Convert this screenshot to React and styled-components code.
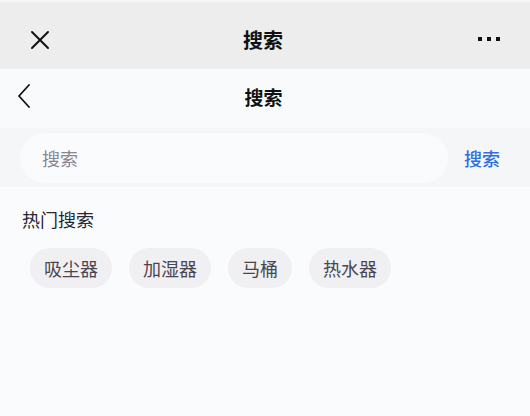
import React from "react";
import styled, { createGlobalStyle } from "styled-components";

const GlobalStyle = createGlobalStyle`
  html, body {
    margin: 0;
    padding: 0;
    background: #fafbfd;
  }
  * {
    box-sizing: border-box;
  }
`;

const FONT = `"Noto Sans CJK SC", "Noto Sans", sans-serif`;

const Page = styled.div`
  width: 530px;
  height: 416px;
  display: flex;
  flex-direction: column;
  background: #fafbfd;
  font-family: ${FONT};
  overflow: hidden;
`;

const TopBar = styled.div`
  height: 69px;
  display: flex;
  align-items: center;
  justify-content: space-between;
  padding: 9px 30px 0 30px;
  background: #ededed;
  border-top: 2px solid #f6f6f6;
`;

const BarTitle = styled.div`
  font-size: ${(props) => props.size};
  font-weight: 700;
  color: #111;
  line-height: 1;
`;

const IconSlot = styled.div`
  width: ${(props) => props.width};
  display: flex;
  align-items: center;
  justify-content: ${(props) => props.justify || "flex-start"};
`;

const Dots = styled.div`
  display: flex;
  gap: 5px;
  margin-top: -2px;
`;

const Dot = styled.span`
  width: 4px;
  height: 4px;
  background: #111;
`;

const NavBar = styled.div`
  height: 59px;
  display: flex;
  align-items: center;
  justify-content: space-between;
  padding: 0 20px 5px 17px;
  background: #f9fafc;
`;

const SearchStrip = styled.div`
  height: 59px;
  display: flex;
  align-items: center;
  gap: 16px;
  padding: 0 30px 0 20px;
  background: #f5f6f8;
`;

const SearchInput = styled.div`
  flex: 1;
  height: 50px;
  border-radius: 25px;
  background: #fafbfd;
  display: flex;
  align-items: center;
  padding-left: 22px;
  font-size: 18px;
  color: #8a8590;
`;

const SearchButton = styled.div`
  font-size: 18px;
  color: #2d6fde;
  font-weight: 500;
`;

const HotSection = styled.div`
  padding: 20px 0 0 22px;
`;

const HotTitle = styled.div`
  font-size: 18px;
  color: #2a2630;
  line-height: 25px;
`;

const ChipRow = styled.div`
  display: flex;
  gap: 17px;
  margin-top: 16px;
  padding-left: 8px;
`;

const Chip = styled.div`
  height: 40px;
  padding: 0 14px;
  border-radius: 20px;
  background: #f0f0f3;
  display: flex;
  align-items: center;
  font-size: 18px;
  color: #4a4550;
`;

const hotWords = ["吸尘器", "加湿器", "马桶", "热水器"];

const App = () => {
  return (
    <>
      <GlobalStyle />
      <Page>
        <TopBar>
          <IconSlot width="60px">
            <svg width="20" height="20" viewBox="0 0 20 20">
              <path
                d="M2 2 L18 18 M18 2 L2 18"
                stroke="#111"
                strokeWidth="2"
                strokeLinecap="round"
              />
            </svg>
          </IconSlot>
          <BarTitle size="20px">搜索</BarTitle>
          <IconSlot width="64px" justify="flex-end">
            <Dots>
              <Dot />
              <Dot />
              <Dot />
            </Dots>
          </IconSlot>
        </TopBar>

        <NavBar>
          <IconSlot width="60px">
            <svg width="14" height="24" viewBox="0 0 14 24">
              <path
                d="M12 1 L2 12 L12 23"
                fill="none"
                stroke="#111"
                strokeWidth="1.8"
                strokeLinecap="round"
                strokeLinejoin="round"
              />
            </svg>
          </IconSlot>
          <BarTitle size="19px">搜索</BarTitle>
          <IconSlot width="60px" />
        </NavBar>

        <SearchStrip>
          <SearchInput>搜索</SearchInput>
          <SearchButton>搜索</SearchButton>
        </SearchStrip>

        <HotSection>
          <HotTitle>热门搜索</HotTitle>
          <ChipRow>
            {hotWords.map((word) => (
              <Chip key={word}>{word}</Chip>
            ))}
          </ChipRow>
        </HotSection>
      </Page>
    </>
  );
};

export default App;
